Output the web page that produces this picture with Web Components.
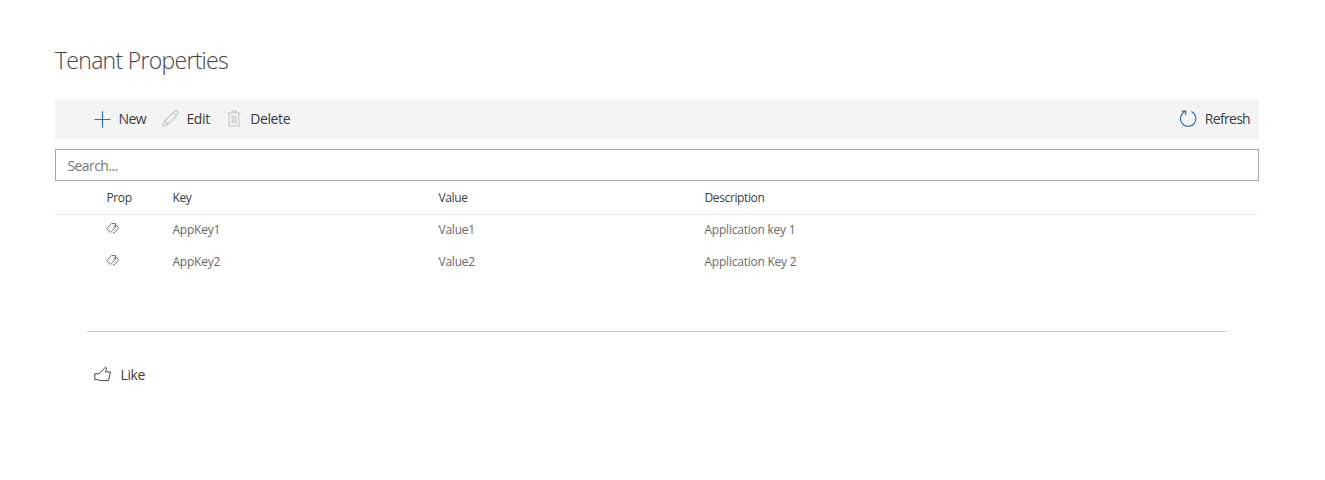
<!DOCTYPE html>
<html lang="en"><head><meta charset="utf-8"><title>Tenant Properties</title>
<style>
body{margin:0;background:#fff;font-family:"Open Sans","Noto Sans",sans-serif;color:#333}
</style></head><body>
<tenant-properties></tenant-properties>
<script>
const define=(name,html)=>customElements.define(name,class extends HTMLElement{
  constructor(){super();const t=document.createElement('template');t.innerHTML=html;
    this.attachShadow({mode:'open'}).append(t.content.cloneNode(true));}
});
const icons={
  add:'<path d="M8.5 .5v16M.5 8.5h16" stroke-width="1.2"/>',
  edit:'<path d="M1 16l1.2-4.5L12.3 1.4a2.2 2.2 0 0 1 3.2 3.2L5.4 14.7zM2.2 11.5q2.8.3 3.2 3.2M11 2.7l3.2 3.2" stroke-width="1.2"/>',
  trash:'<path d="M1.5 3h13M3 3v13h10V3M6 3V1h4v2M6.2 5.5v8M8 5.5v8M9.8 5.5v8" stroke-width="1.1"/>',
  refresh:'<path d="M11.4 1.6A7.7 7.7 0 1 1 5 1.6M1.6 1.1h4.1v4.1" stroke-width="1.1"/>',
  like:'<path d="M.8 7.8H5L10.1 2.7Q11.1.8 12 1.5Q13 2.7 11.4 5.9H16.5L14.5 14.6H6L4.7 13.7H.8z"/>',
  tag:'<path d="M.7 6.5L5.6 1.5H9.4V5.2L4.5 10.5zM9.4 2.2L12.2 5.6Q12.4 6.2 12 6.7L8 10.9H6.8M7.6 3.2L9.4 5.2" stroke-width=".9"/>'
};
customElements.define('line-icon',class extends HTMLElement{
  constructor(){super();this.attachShadow({mode:'open'});}
  connectedCallback(){
    const n=this.getAttribute('name'),tag=n==='tag';
    this.shadowRoot.innerHTML=`<style>:host{display:block;flex:none;width:${tag?13:17}px;height:${tag?12:17}px}svg{display:block;width:100%;height:100%;fill:none;stroke:currentColor}</style><svg viewBox="0 0 ${tag?'13 12':'17 17'}">${icons[n]}</svg>`;
  }
});
define('command-button',`<style>
:host{display:flex;align-items:center;gap:var(--gap,7.5px);height:40px;font-size:14px;line-height:20px;white-space:nowrap;color:#3c3c3c}
::slotted(line-icon){color:var(--icon,#2a75b3);margin-top:var(--lift,-1px)}
span{letter-spacing:var(--track,-.4px)}
</style><slot name="icon"></slot><span><slot></slot></span>`);
define('command-bar',`<style>
:host{display:flex;justify-content:space-between;height:40px;padding:0 9px 0 39px;background:#f4f4f4}
div{display:flex;gap:16px}
</style><div><slot></slot></div><slot name="far"></slot>`);
define('search-box',`<style>
:host{display:flex;align-items:center;box-sizing:border-box;height:32px;margin-top:10px;padding:1px 12px 0 11.5px;border:1px solid #a6a6a6;font-size:14px;color:#767676;letter-spacing:-.6px}
</style><slot></slot>`);
define('list-row',`<style>
:host{display:grid;box-sizing:border-box;grid-template-columns:66px 266px 266px 1fr;align-items:center;height:32px;padding:0 0 2px 51.5px;font-size:12px;line-height:16px;color:#6a6a6a;letter-spacing:-.23px}
:host([header]){height:34px;padding-bottom:0;border-bottom:1px solid #eaeaea;color:#3c3c3c;letter-spacing:-.38px}
::slotted(line-icon){margin:-5px 0 0 -.5px;color:#666}
</style><slot></slot>`);
define('tenant-properties',`<style>
:host{display:block;box-sizing:border-box;width:1325px;height:480px;padding:43px 66px 0 55px}
h1{margin:0 0 22px;font-size:23px;line-height:34px;font-weight:300;letter-spacing:-.71px;color:#444}
hr{height:1px;margin:52px 32px 23px;border:0;background:#c8c8c8}
.like{margin-left:39px;--icon:#444;--gap:9.5px;--lift:-2px}
.muted{--icon:#c8c8c8}
</style>
<h1>Tenant Properties</h1>
<command-bar>
<command-button style="--track:-.6px;--lift:0px"><line-icon slot="icon" name="add"></line-icon>New</command-button>
<command-button class="muted"><line-icon slot="icon" name="edit"></line-icon>Edit</command-button>
<command-button class="muted"><line-icon slot="icon" name="trash"></line-icon>Delete</command-button>
<command-button slot="far" style="--track:-.7px"><line-icon slot="icon" name="refresh"></line-icon>Refresh</command-button>
</command-bar>
<search-box>Search...</search-box>
<list-row header><span>Prop</span><span>Key</span><span>Value</span><span>Description</span></list-row>
<list-row><line-icon name="tag"></line-icon><span>AppKey1</span><span>Value1</span><span>Application key 1</span></list-row>
<list-row><line-icon name="tag"></line-icon><span>AppKey2</span><span>Value2</span><span>Application Key 2</span></list-row>
<hr>
<command-button class="like"><line-icon slot="icon" name="like"></line-icon>Like</command-button>`);
</script></body></html>
